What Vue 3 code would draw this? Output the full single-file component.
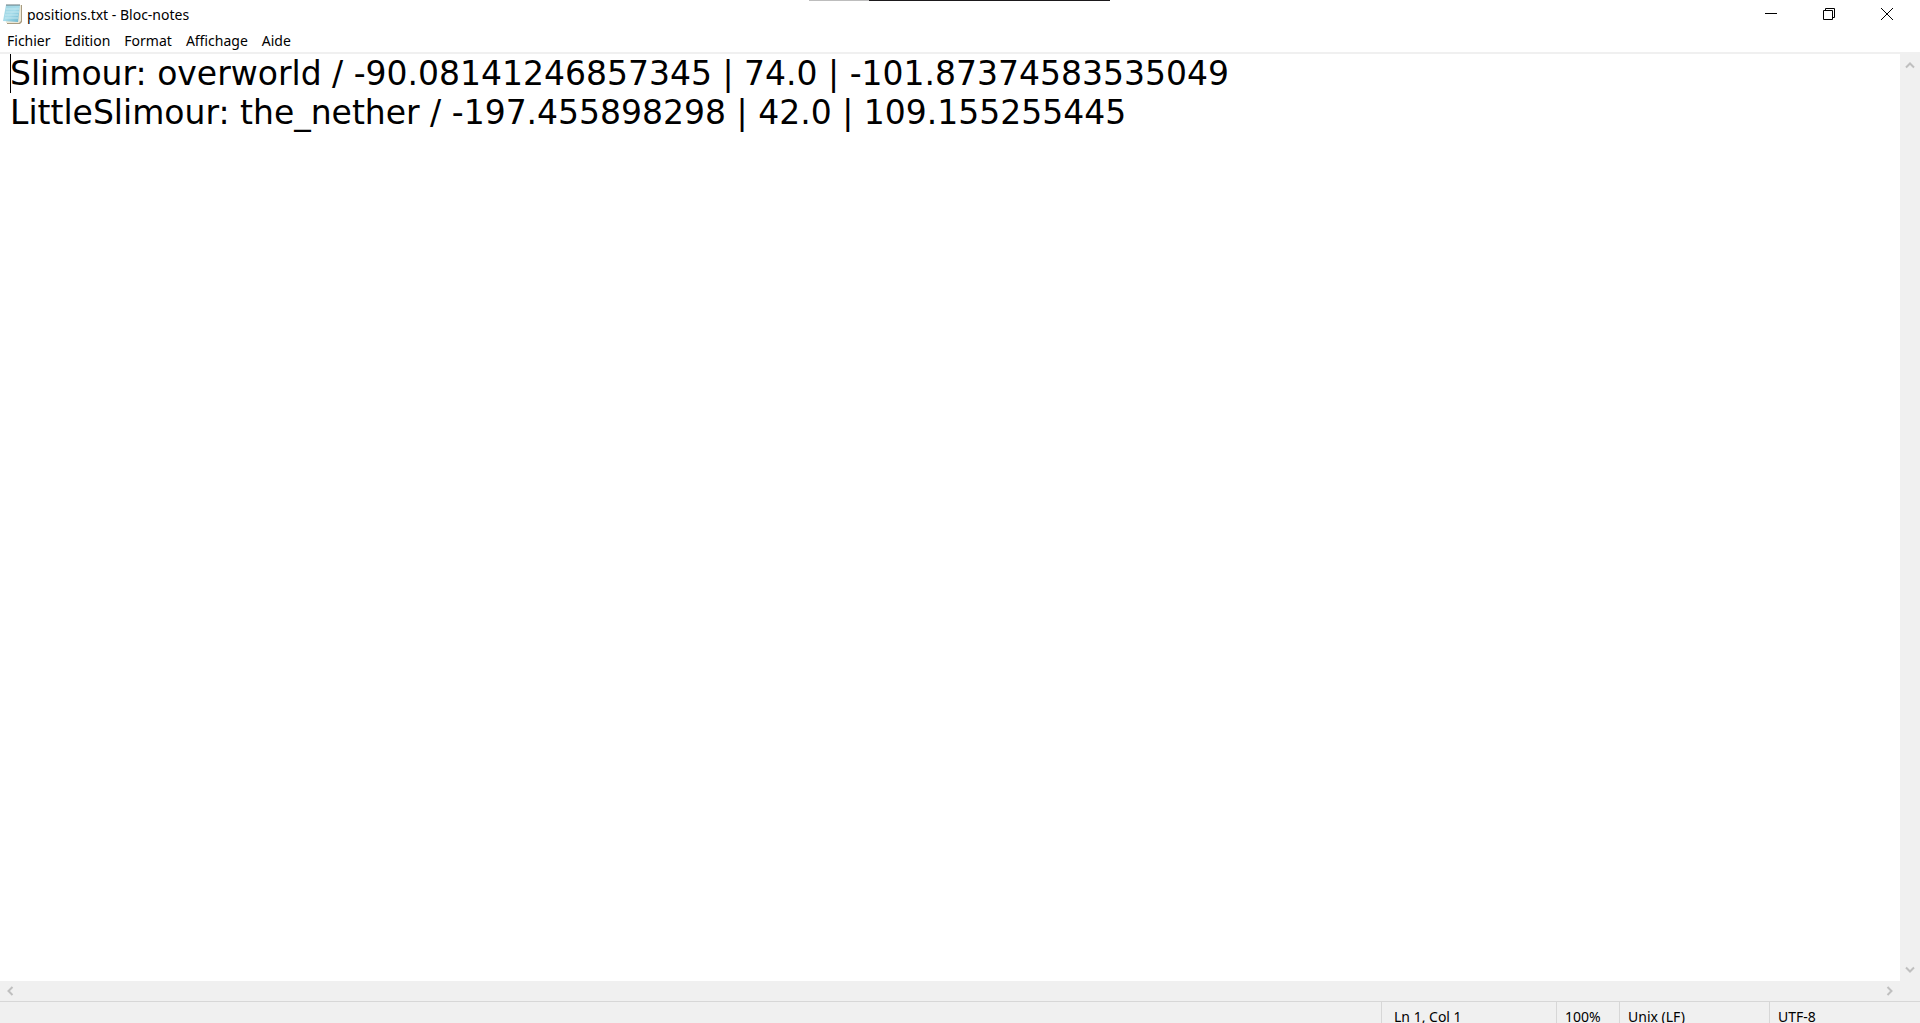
<script setup>
import { ref } from 'vue'

const menus = ['Fichier', 'Edition', 'Format', 'Affichage', 'Aide']
const content = ref(
  'Slimour: overworld / -90.08141246857345 | 74.0 | -101.87374583535049\n' +
  'LittleSlimour: the_nether / -197.455898298 | 42.0 | 109.155255445'
)
</script>

<template>
  <div class="window">
    <div class="top-edge"></div>
    <header class="titlebar">
      <svg class="app-icon" width="20" height="22" viewBox="0 0 20 22" aria-hidden="true">
        <defs>
          <linearGradient id="sheet" x1="0" y1="0" x2="1" y2="1">
            <stop offset="0" stop-color="#9fd3e0" />
            <stop offset="0.5" stop-color="#a6dcea" />
            <stop offset="1" stop-color="#69b3cc" />
          </linearGradient>
        </defs>
        <path d="M4 2H19V19L17 21H4Z" fill="#a99c80" />
        <path d="M4 2H18V18L16 20H3Z" fill="#ece8d8" />
        <path d="M3 2H17L15 19L0 18Z" fill="url(#sheet)" />
        <path d="M3 6H16M3 9H16M2 12H15M2 15H15" stroke="#c4e8f0" stroke-width="1" />
        <path d="M4 1V3M6 1V3M8 1V3M10 1V3M12 1V3M14 1V3M16 1V3" stroke="#67787e" stroke-width="1" />
      </svg>
      <h1 class="title">positions.txt - Bloc-notes</h1>
      <div class="controls">
        <button type="button" aria-label="Réduire">
          <svg width="12" height="12" viewBox="0 0 12 12"><path d="M0 5.500H12" /></svg>
        </button>
        <button type="button" aria-label="Niveau inférieur">
          <svg width="12" height="12" viewBox="0 0 12 12"><path d="M0.500 2.500H9.500V11.500H0.500ZM2.500 2.500V0.500H11.500V9.500H9.500" /></svg>
        </button>
        <button type="button" aria-label="Fermer">
          <svg width="12" height="12" viewBox="0 0 12 12"><path d="M0 0L12 12M12 0L0 12" /></svg>
        </button>
      </div>
    </header>
    <nav class="menubar">
      <button v-for="menu in menus" :key="menu" type="button">{{ menu }}</button>
    </nav>
    <main class="editor">
      <div class="page">
        <textarea v-model="content" wrap="off" spellcheck="false" aria-label="Texte du document"></textarea>
        <span class="caret"></span>
      </div>
      <div class="vscroll">
        <button type="button" aria-label="Défiler vers le haut">
          <svg width="10" height="8" viewBox="0 0 10 8"><path d="M1 6.500L5 2.500L9 6.500" /></svg>
        </button>
        <button type="button" aria-label="Défiler vers le bas">
          <svg width="10" height="8" viewBox="0 0 10 8"><path d="M1 1.500L5 5.500L9 1.500" /></svg>
        </button>
      </div>
    </main>
    <div class="hscroll">
      <button type="button" aria-label="Défiler vers la gauche">
        <svg width="8" height="10" viewBox="0 0 8 10"><path d="M6.500 1L2.500 5L6.500 9" /></svg>
      </button>
      <button type="button" aria-label="Défiler vers la droite">
        <svg width="8" height="10" viewBox="0 0 8 10"><path d="M1.500 1L5.500 5L1.500 9" /></svg>
      </button>
    </div>
    <footer class="statusbar">
      <span class="cell position">Ln 1, Col 1</span>
      <span class="cell zoom">100%</span>
      <span class="cell ending">Unix (LF)</span>
      <span class="cell encoding">UTF-8</span>
    </footer>
  </div>
</template>

<style>
body {
  margin: 0;
  overflow: hidden;
}
</style>

<style scoped>
.window {
  position: relative;
  display: flex;
  flex-direction: column;
  height: 100vh;
  overflow: hidden;
  background: #fff;
  color: #000;
  font-family: "Noto Sans", "Open Sans", sans-serif;
  font-size: 14px;
}
button {
  display: flex;
  align-items: center;
  justify-content: center;
  padding: 0;
  border: 0;
  background: none;
  color: inherit;
  font: inherit;
}
svg {
  display: block;
  fill: none;
}
.top-edge {
  position: absolute;
  top: 0;
  left: 809px;
  width: 301px;
  height: 1px;
  background: linear-gradient(to right, #bdbdbd 60px, #1b191b 60px);
}
.titlebar {
  display: flex;
  align-items: flex-start;
  height: 30px;
  flex: none;
}
.app-icon {
  margin: 3px 0 0 3px;
}
.title {
  flex: 1;
  margin: 0 0 0 4px;
  font-size: 14px;
  font-weight: 400;
  line-height: 30px;
}
.controls {
  display: flex;
  margin-right: 4px;
}
.controls button {
  width: 58px;
  height: 28px;
}
.controls path {
  stroke: #000;
}
.menubar {
  display: flex;
  gap: 14px;
  height: 22px;
  flex: none;
  padding-left: 7px;
  border-bottom: 2px solid #f0f0f0;
}
.menubar button {
  line-height: 22px;
}
.editor {
  display: flex;
  flex: 1;
  min-height: 0;
}
.page {
  position: relative;
  flex: 1;
}
textarea {
  display: block;
  box-sizing: border-box;
  width: 100%;
  height: 100%;
  margin: 0;
  padding: 0 0 0 10px;
  border: 0;
  outline: 0;
  resize: none;
  overflow: hidden;
  background: #fff;
  color: #000;
  font: 33px/39px "DejaVu Sans", sans-serif;
}
.caret {
  position: absolute;
  top: 0;
  left: 10px;
  width: 1px;
  height: 39px;
  background: #000;
}
.vscroll {
  display: flex;
  flex-direction: column;
  justify-content: space-between;
  width: 20px;
  background: #f0f0f0;
}
.vscroll button {
  width: 20px;
  height: 22px;
}
.hscroll {
  display: flex;
  justify-content: space-between;
  flex: none;
  height: 20px;
  padding-right: 20px;
  background: #f0f0f0;
}
.hscroll button {
  width: 20px;
  height: 20px;
}
.vscroll path,
.hscroll path {
  stroke: #bfbfbf;
  stroke-width: 2;
}
.statusbar {
  display: flex;
  justify-content: flex-end;
  flex: none;
  height: 21px;
  border-top: 1px solid #d7d7d7;
  background: #f0f0f0;
  line-height: 12px;
  white-space: nowrap;
}
.cell {
  box-sizing: border-box;
  padding-top: 9px;
  padding-left: 8px;
  border-left: 1px solid #d7d7d7;
}
.position {
  width: 175px;
  padding-left: 12px;
}
.zoom {
  width: 63px;
}
.ending {
  width: 150px;
}
.encoding {
  width: 151px;
}
</style>
